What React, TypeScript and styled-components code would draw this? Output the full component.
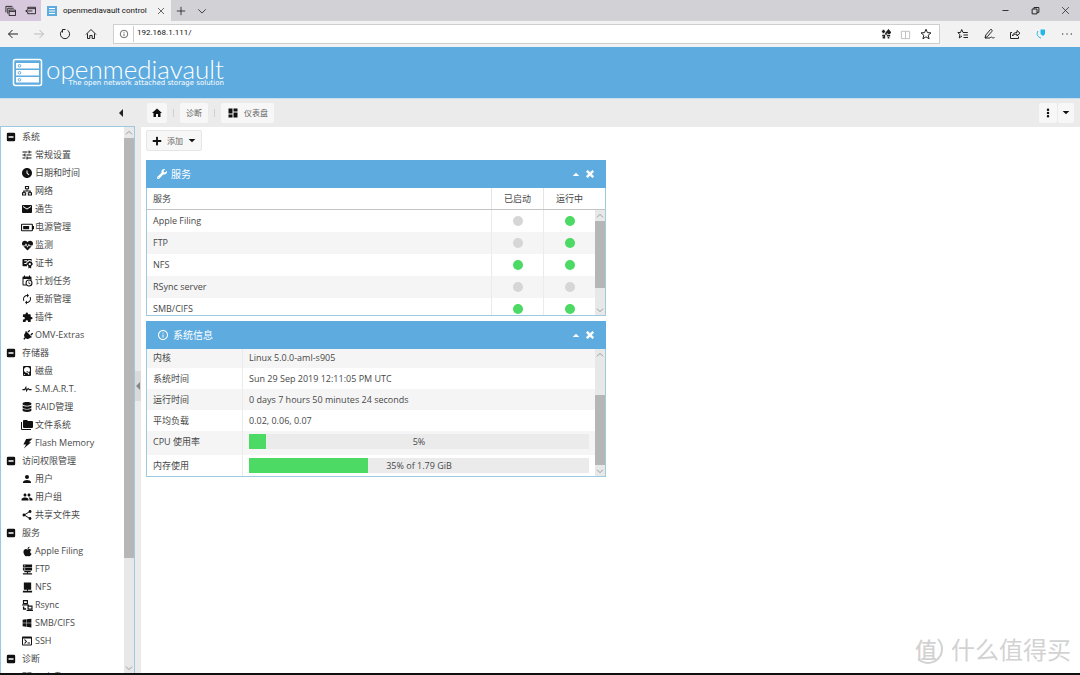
import React from "react";
import styled, { createGlobalStyle } from "styled-components";
import {
  MdTune, MdAccessTimeFilled, MdEmail, MdAutorenew, MdExtension, MdPerson,
  MdPeople, MdShare, MdDashboard, MdHome, MdInfoOutline,
} from "react-icons/md";
import {
  FaPlug, FaDatabase, FaApple, FaWindows, FaWrench,
  FaHeartbeat, FaPlus, FaTimes,
} from "react-icons/fa";

const blue = "#5dabdf";
const line = "#9ccbe0";
const grey = "#ebebeb";
const green = "#4cd964";
const sans = `"Open Sans", "Noto Sans CJK SC", sans-serif`;

const GlobalStyle = createGlobalStyle`
  * { box-sizing: border-box; }
  body { margin: 0; background: #fff; color: #484848; font: 9px/18px ${sans}; }
  button, input { font: inherit; color: inherit; border: 0; padding: 0; margin: 0; background: none; }
  button { display: inline-flex; align-items: center; justify-content: center; }
  ul { list-style: none; margin: 0; padding: 0; }
  a { color: inherit; text-decoration: none; }
  svg { display: block; flex: none; }
`;

const Page = styled.div`
  display: flex;
  flex-direction: column;
  height: 100vh;
  overflow: hidden;
  border-bottom: 2px solid #111;
`;

/* ---------- browser chrome ---------- */
const TabStrip = styled.div`
  display: flex;
  height: 21px;
  flex: none;
  background: #d1d1d6;
  color: #222;
`;
const TabTools = styled.div`
  display: flex;
  align-items: center;
  justify-content: space-between;
  width: 41px;
  padding: 0 5px;
  background: #d8c8de;
`;
const Tab = styled.div`
  display: flex;
  align-items: center;
  gap: 6px;
  width: 130px;
  padding: 0 6px;
  background: #f2f2f2;
`;
const TabTitle = styled.span`
  flex: 1;
  overflow: hidden;
  white-space: nowrap;
  color: #111;
  font-family: Roboto, sans-serif;
  font-size: 8px;
`;
const TabActions = styled.div`
  display: flex;
  align-items: center;
  gap: 11px;
  flex: 1;
  padding-left: 5px;
`;
const WindowActions = styled.div`
  display: flex;
  align-items: center;
  gap: 21px;
  padding-right: 10px;
`;
const AddressRow = styled.div`
  display: flex;
  align-items: center;
  height: 26px;
  flex: none;
  background: #f2f2f2;
  color: #222;
`;
const NavButtons = styled.div`
  display: flex;
  gap: 14px;
  width: 113px;
  padding-left: 7px;
`;
const AddressBox = styled.div`
  display: flex;
  align-items: center;
  gap: 4px;
  flex: 1;
  height: 20px;
  padding: 0 7px 0 5px;
  background: #fff;
  border: 1px solid #cfcfcf;
`;
const AddressInput = styled.input`
  flex: 1;
  min-width: 0;
  height: 16px;
  padding: 0 0 3px 3px;
  border-left: 1px solid #ccc;
  color: #111;
  font-family: Roboto, sans-serif;
  font-size: 8px;
  outline: 0;
`;
const AddressTools = styled.div`
  display: flex;
  align-items: center;
  gap: 9px;
`;
const BrowserTools = styled.div`
  display: flex;
  gap: 14px;
  padding: 0 7px 0 17px;
`;
const FadedButton = styled.button`
  color: #bbb;
`;

/* ---------- application header ---------- */
const Header = styled.header`
  display: flex;
  align-items: center;
  gap: 3px;
  height: 51px;
  flex: none;
  padding: 0 12px;
  background: ${blue};
  color: #fff;
`;
const Brand = styled.div`
  display: flex;
  flex-direction: column;
  align-items: flex-end;
`;
const BrandName = styled.span`
  font: 300 26px/22px Lato, sans-serif;
`;
const BrandLine = styled.span`
  font: 7px/7px "DejaVu Sans", sans-serif;
`;

/* ---------- body ---------- */
const Body = styled.div`
  display: flex;
  flex: 1;
  min-height: 0;
  border-top: 1px solid #c8dfee;
`;
const Sidebar = styled.nav`
  display: flex;
  flex-direction: column;
  width: 135px;
  flex: none;
`;
const SidebarHead = styled.div`
  display: flex;
  align-items: center;
  justify-content: flex-end;
  height: 27px;
  flex: none;
  padding-right: 10px;
  background: ${grey};
  color: #222;
`;
const TreeFrame = styled.div`
  display: flex;
  flex: 1;
  min-height: 0;
  border: 1px solid ${line};
  border-bottom: 0;
`;
const Tree = styled.ul`
  flex: 1;
  padding-top: 1px;
  overflow: hidden;
`;
const Group = styled.button`
  display: flex;
  justify-content: flex-start;
  gap: 6px;
  width: 100%;
  height: 18px;
  padding-left: 5px;
  svg { color: #111; }
`;
const Leaf = styled.a`
  display: flex;
  align-items: center;
  gap: 2px;
  height: 18px;
  padding-left: 20px;
  white-space: nowrap;
`;
const LeafIcon = styled.span`
  display: flex;
  justify-content: center;
  width: 12px;
  color: #111;
`;
const Splitter = styled.div`
  display: flex;
  align-items: center;
  width: 6px;
  flex: none;
  background: ${grey};
`;
const SplitterGrip = styled.button`
  width: 6px;
  height: 30px;
  background: #dadada;
  color: #888;
`;
const Main = styled.main`
  display: flex;
  flex-direction: column;
  flex: 1;
  min-width: 0;
`;
const Breadcrumbs = styled.div`
  display: flex;
  align-items: center;
  gap: 6px;
  height: 28px;
  flex: none;
  padding: 0 6px;
  background: ${grey};
`;
const Divider = styled.span`
  width: 1px;
  height: 8px;
  background: #d0d0d0;
`;
const ToolButton = styled.button<{ $wide?: boolean }>`
  gap: 5px;
  height: 20px;
  padding: 0 ${(p) => (p.$wide ? 6 : 4)}px;
  background: #f7f7f7;
  border-radius: 2px;
  color: #666;
  font-size: 8px;
  svg { color: #111; }
`;
const SplitButton = styled.div`
  display: flex;
  gap: 1px;
  margin-left: auto;
`;
const Toolbar = styled.div`
  display: flex;
  padding: 3px 5px 9px;
`;
const AddButton = styled(ToolButton)`
  height: 21px;
  padding: 0 5px;
  border: 1px solid #e6e6e6;
`;
const Dashboard = styled.div`
  display: grid;
  grid-template-columns: 1fr 1fr;
  gap: 5px;
  padding: 0 9px 0 5px;
`;
const Column = styled.div`
  display: flex;
  flex-direction: column;
  gap: 5px;
`;
const Panel = styled.section`
  border: 1px solid ${line};
`;
const PanelHead = styled.div`
  display: flex;
  align-items: center;
  gap: 4px;
  height: 28px;
  margin: -1px -1px 0;
  padding: 0 11px;
  background: ${blue};
  color: #fff;
`;
const PanelTitle = styled.h2`
  flex: 1;
  margin: 0;
  font: 10px/18px ${sans};
`;
const PanelTool = styled.button`
  width: 10px;
  height: 12px;
`;
const ScrollArea = styled.div<{ $height: number }>`
  display: flex;
  height: ${(p) => p.$height}px;
`;
const Viewport = styled.div`
  flex: 1;
  min-width: 0;
  overflow: hidden;
`;
const DataTable = styled.table`
  width: 100%;
  border-collapse: separate;
  border-spacing: 0;
  table-layout: fixed;
  th, td { padding: 0 6px; text-align: left; font-weight: 400; }
`;
const ServiceHead = styled(DataTable)`
  border-bottom: 1px solid #c4c4c4;
  th { height: 21px; }
  th + th { border-left: 1px solid #e4e4e4; text-align: center; }
  th:last-child { padding-right: 16px; }
`;
const ServiceBody = styled(DataTable)`
  td { height: 22px; }
  td + td { border-left: 1px solid #ebebeb; }
  tr:nth-child(even) { background: #f5f5f5; }
`;
const InfoBody = styled(DataTable)`
  margin-top: -2px;
  th, td { height: 21px; line-height: 15px; }
  td { border-left: 1px solid #ebebeb; }
  tr:nth-child(odd) { background: #f5f5f5; }
`;
const BarRow = styled.tr`
  && th, && td { height: 24px; padding-top: 3px; padding-bottom: 6px; vertical-align: top; }
`;
const Dot = styled.span<{ $on: boolean }>`
  display: block;
  width: 10px;
  height: 10px;
  margin: auto;
  border-radius: 50%;
  background: ${(p) => (p.$on ? green : "#d6d6d6")};
`;
const Bar = styled.div<{ $value: number }>`
  height: 15px;
  text-align: center;
  background: linear-gradient(to right, ${green} ${(p) => p.$value}%, ${grey} ${(p) => p.$value}%);
`;
const Track = styled.div`
  display: flex;
  flex-direction: column;
  align-items: center;
  width: 10px;
  flex: none;
  background: #e8e8e8;
  color: #777;
`;
const TrackArrow = styled.span`
  display: flex;
  align-items: center;
  height: 11px;
`;
const TrackRoom = styled.span<{ $grow: number }>`
  flex: ${(p) => p.$grow} 0 0;
`;
const Thumb = styled.span<{ $grow: number }>`
  flex: ${(p) => p.$grow} 0 0;
  width: 100%;
  background: #b6b6b6;
`;
const Watermark = styled.div`
  position: absolute;
  right: 9px;
  bottom: 9px;
  display: flex;
  align-items: center;
  gap: 8px;
  color: #d2d2d2;
  font: 24px/34px "Noto Sans CJK SC", sans-serif;
`;
const Seal = styled.span`
  width: 30px;
  height: 30px;
  border: 2px solid #d2d2d2;
  border-color: transparent #d2d2d2 #d2d2d2 transparent;
  border-radius: 50%;
  text-align: left;
  font-size: 22px;
  line-height: 24px;
  font-weight: 500;
`;

/* ---------- icons ---------- */
const Solid = ({ d, size = 12 }: { d: string; size?: number }) => (
  <svg width={size} height={size} viewBox="0 0 24 24" fill="currentColor"><path fillRule="evenodd" d={d} /></svg>
);
const Stroke = ({ d, size = 12, w = 1 }: { d: string; size?: number; w?: number }) => (
  <svg width={size} height={size} viewBox="0 0 12 12" fill="none" stroke="currentColor" strokeWidth={w}><path d={d} /></svg>
);
const minusBox = "M5 2H19A3 3 0 0 1 22 5V19A3 3 0 0 1 19 22H5A3 3 0 0 1 2 19V5A3 3 0 0 1 5 2ZM6 10V14H18V10Z";
const calendar = "M15,13H16.5V15.82L18.94,17.23L18.19,18.53L15,16.69V13M19,8H5V19H9.67C9.24,18.09 9,17.07 9,16A7,7 0 0,1 16,9C17.07,9 18.09,9.24 19,9.67V8M5,21C3.89,21 3,20.1 3,19V5C3,3.89 3.89,3 5,3H6V1H8V3H16V1H18V3H19A2,2 0 0,1 21,5V11.1C22.24,12.36 23,14.09 23,16A7,7 0 0,1 16,23C14.09,23 12.36,22.24 11.1,21H5M16,11.15A4.85,4.85 0 0,0 11.15,16C11.15,18.68 13.32,20.85 16,20.85A4.85,4.85 0 0,0 20.85,16C20.85,13.32 18.68,11.15 16,11.15Z";
const disk = "M6,2H18A2,2 0 0,1 20,4V20A2,2 0 0,1 18,22H6A2,2 0 0,1 4,20V4A2,2 0 0,1 6,2M12,4A6,6 0 0,0 6,10C6,13.31 8.69,16 12.1,16L11.22,13.77C10.95,13.29 11.11,12.68 11.59,12.4L12.45,11.9C12.93,11.63 13.54,11.79 13.82,12.27L15.74,14.69C17.12,13.59 18,11.9 18,10A6,6 0 0,0 12,4M7,18A1,1 0 0,0 6,19A1,1 0 0,0 7,20A1,1 0 0,0 8,19A1,1 0 0,0 7,18M12.09,13.27L14.58,19.58L17.17,18.08L12.95,12.77L12.09,13.27Z";
const pulse = "M1,12H5.8L10.1,4L11.3,13L14.5,9L17.8,12H23V15H17L14.67,12.67L9.92,19.5L8.94,12L7,15H1V12Z";
const folders = "M22,4H14L12,2H6A2,2 0 0,0 4,4V16A2,2 0 0,0 6,18H22A2,2 0 0,0 24,16V6A2,2 0 0,0 22,4M2,6H0V20A2,2 0 0,0 2,22H20V20H2V6Z";
const terminal = "M20,19V7H4V19H20M20,3A2,2 0 0,1 22,5V19A2,2 0 0,1 20,21H4A2,2 0 0,1 2,19V5C2,3.89 2.9,3 4,3H20M13,17V15H18V17H13M9.58,13L5.57,9H8.4L11.7,12.3C12.09,12.69 12.09,13.33 11.7,13.72L8.42,17H5.59L9.58,13Z";
const servers = "M2 1H22V7H2ZM4 3V5H7V3ZM2 8H22V14H2ZM4 10V12H7V10ZM5 15H19V18H13V20H22V23H2V20H11V18H5Z";
const server = "M4 1H20V17H13V19H22V23H2V19H11V17H4Z";
const lan = "M7 0H17V8H13V11H21V15H24V23H14V15H18V13H6V15H10V23H0V15H3V11H11V8H7ZM9.500 2.500V5.500H14.500V2.500ZM2.500 17.500V20.500H7.500V17.500ZM16.500 17.500V20.500H21.500V17.500Z";
const certificate = "M3 2H21V7A6 6 0 0 0 11 15V18H3A2 2 0 0 1 1 16V4A2 2 0 0 1 3 2ZM5 5V7H11V5ZM5 11V13H9V11ZM17 6L19 8L22 8L22 11L24 13L22 15L20 18V23L17 21L14 23V18L12 15L10 13L12 11L12 8L15 8ZM17 11A2.500 2.500 0 1 0 17 16A2.500 2.500 0 1 0 17 11Z";
const machines = "M2 0H13V9H2ZM4.500 2.500V6.500H10.500V2.500ZM0 10H15V12H0ZM2 14H5V18H9V21H2ZM12 12H23V21H12ZM14.500 14.500V18.500H20.500V14.500ZM10 22H24V24H10Z";
const battery = "M2 5H20A2 2 0 0 1 22 7V9H24V15H22V17A2 2 0 0 1 20 19H2A2 2 0 0 1 0 17V7A2 2 0 0 1 2 5ZM2 7V17H20V7ZM4 9H15V15H4Z";
const bolt = "M9 2L23 1L15 9L20 9L4 23L9 14L3 14Z";
const kebab = "M12 1A3 3 0 0 1 12 7A3 3 0 0 1 12 1ZM12 9A3 3 0 0 1 12 15A3 3 0 0 1 12 9ZM12 17A3 3 0 0 1 12 23A3 3 0 0 1 12 17Z";

const Up = () => <Stroke size={8} d="M1.500 8L6 3.500L10.500 8" />;
const Down = () => <Stroke size={8} d="M1.500 4L6 8.500L10.500 4" />;
const Caret = ({ dir }: { dir: "up" | "down" | "left" }) => {
  const d = { up: "M1 9L6 4L11 9Z", down: "M1 3L6 8L11 3Z", left: "M9 0L3 6L9 12Z" }[dir];
  return <svg width={8} height={8} viewBox="0 0 12 12" fill="currentColor"><path d={d} /></svg>;
};

const Scrollbar = ({ before, thumb, after }: { before: number; thumb: number; after: number }) => (
  <Track aria-hidden>
    <TrackArrow><Up /></TrackArrow>
    <TrackRoom $grow={before} />
    <Thumb $grow={thumb} />
    <TrackRoom $grow={after} />
    <TrackArrow><Down /></TrackArrow>
  </Track>
);

const TiltedPlug = styled(FaPlug)`
  transform: rotate(45deg);
`;

type Item = [string, React.ReactNode];
const tree: { name: string; items: Item[] }[] = [
  {
    name: "系统",
    items: [
      ["常规设置", <MdTune size={12} />],
      ["日期和时间", <MdAccessTimeFilled size={12} />],
      ["网络", <Solid d={lan} size={10} />],
      ["通告", <MdEmail size={12} />],
      ["电源管理", <Solid d={battery} size={13} />],
      ["监测", <FaHeartbeat size={11} />],
      ["证书", <Solid d={certificate} size={11} />],
      ["计划任务", <Solid d={calendar} />],
      ["更新管理", <MdAutorenew size={12} />],
      ["插件", <MdExtension size={11} />],
      ["OMV-Extras", <TiltedPlug size={11} />],
    ],
  },
  {
    name: "存储器",
    items: [
      ["磁盘", <Solid d={disk} />],
      ["S.M.A.R.T.", <Solid d={pulse} size={10} />],
      ["RAID管理", <FaDatabase size={10} />],
      ["文件系统", <Solid d={folders} />],
      ["Flash Memory", <Solid d={bolt} size={11} />],
    ],
  },
  {
    name: "访问权限管理",
    items: [
      ["用户", <MdPerson size={12} />],
      ["用户组", <MdPeople size={12} />],
      ["共享文件夹", <MdShare size={12} />],
    ],
  },
  {
    name: "服务",
    items: [
      ["Apple Filing", <FaApple size={11} />],
      ["FTP", <Solid d={servers} size={11} />],
      ["NFS", <Solid d={server} size={11} />],
      ["Rsync", <Solid d={machines} size={11} />],
      ["SMB/CIFS", <FaWindows size={10} />],
      ["SSH", <Solid d={terminal} />],
    ],
  },
  { name: "诊断", items: [["仪表盘", <MdDashboard size={12} />]] },
];

const services: [string, boolean, boolean][] = [
  ["Apple Filing", false, true],
  ["FTP", false, true],
  ["NFS", true, true],
  ["RSync server", false, false],
  ["SMB/CIFS", true, true],
];

const info = [
  ["内核", "Linux 5.0.0-aml-s905"],
  ["系统时间", "Sun 29 Sep 2019 12:11:05 PM UTC"],
  ["运行时间", "0 days 7 hours 50 minutes 24 seconds"],
  ["平均负载", "0.02, 0.06, 0.07"],
];
const usage: [string, string, number][] = [
  ["CPU 使用率", "5%", 5],
  ["内存使用", "35% of 1.79 GiB", 35],
];

const PanelTools = () => (
  <>
    <PanelTool aria-label="折叠"><Caret dir="up" /></PanelTool>
    <PanelTool aria-label="关闭"><FaTimes size={10} stroke="currentColor" strokeWidth={50} /></PanelTool>
  </>
);

export default function App() {
  return (
    <Page>
      <GlobalStyle />
      <TabStrip>
        <TabTools>
          <button aria-label="Tabs set aside"><Stroke size={11} d="M1 8V1.500H8M3 9.500V3.500H9.500M4.500 5.500H11.500V11.500H4.500ZM4.500 7H11.500" /></button>
          <button aria-label="Set tabs aside"><Stroke size={11} d="M3 4V2.500H11.500V9.500H3V8M3 4H11.500M0.500 6.500H8M3 4.500L1 6.500L3 8.500" /></button>
        </TabTools>
        <Tab>
          <svg width="10" height="10" viewBox="0 0 10 10"><path fill={blue} d="M0 0H10V10H0Z" /><path fill="#fff" d="M2 2H8V3H2ZM2 4.500H8V5.500H2ZM2 7H8V8H2Z" /></svg>
          <TabTitle>openmediavault control</TabTitle>
          <button aria-label="Close tab"><Stroke size={8} d="M1.500 1.500L10.500 10.500M10.500 1.500L1.500 10.500" /></button>
        </Tab>
        <TabActions>
          <button aria-label="New tab"><Stroke size={10} d="M6 1V11M1 6H11" /></button>
          <button aria-label="Tab previews"><Stroke size={10} d="M1.500 4L6 8.500L10.500 4" /></button>
        </TabActions>
        <WindowActions>
          <button aria-label="Minimize"><Stroke size={9} d="M2 6H10" w={1.2} /></button>
          <button aria-label="Restore"><Stroke size={9} w={1.3} d="M1.500 4H8V10.500H1.500ZM4 4V2H10.500V8.500H8" /></button>
          <button aria-label="Close"><Stroke size={9} d="M1.500 1.500L10.500 10.500M10.500 1.500L1.500 10.500" /></button>
        </WindowActions>
      </TabStrip>
      <AddressRow>
        <NavButtons>
          <button aria-label="Back"><Stroke d="M11 6H1.500M5.500 2L1.500 6L5.500 10" /></button>
          <FadedButton aria-label="Forward"><Stroke d="M1 6H10.500M6.500 2L10.500 6L6.500 10" /></FadedButton>
          <button aria-label="Refresh"><Stroke d="M3.500 1.500H6.500M3.500 1.500V4.500M3.500 2.200A4.600 4.600 0 1 0 8.500 2.200" /></button>
          <button aria-label="Home"><Stroke d="M1 6.500L6 1.500L11 6.500M2.500 5.500V10.500H4.800V7.500H7.200V10.500H9.500V5.500" /></button>
        </NavButtons>
        <AddressBox>
          <Stroke size={10} w={0.8} d="M6 1.500A4.500 4.500 0 1 0 6 10.500A4.500 4.500 0 1 0 6 1.500M6 5.500V8.500M6 3.500V4.500" />
          <AddressInput aria-label="Address" defaultValue="192.168.1.111/" />
          <AddressTools>
            <button aria-label="Translate"><Stroke size={10} w={2} d="M1 3H5M3 1V5M7 4L9 1.500L11 4ZM8 5H11M1.500 8H4V10.500H2M7 8H11M8 10.500H10M5 6H7" /></button>
            <FadedButton aria-label="Reading view"><Stroke size={11} d="M6 2.500V10.500M1.500 2.500H10.500V10.500H1.500Z" /></FadedButton>
            <button aria-label="Favourite"><Stroke d="M6 1.200L7.400 4.600L11 4.900L8.200 7.200L9.100 10.800L6 8.800L2.900 10.800L3.800 7.200L1 4.900L4.600 4.600Z" /></button>
          </AddressTools>
        </AddressBox>
        <BrowserTools>
          <button aria-label="Hub"><Stroke d="M10.800 4.500H6L4.700 1.500L3.500 4.500H0.800L3 6.700L2.200 10L5 8M6.500 7H11M6.500 9.500H11" /></button>
          <button aria-label="Notes"><Stroke d="M2 10L2.800 7L7.500 1.500C9 1 9.500 2.500 8.800 3.500L4.500 8.500L2 10H7C9 7.500 8.500 11 11.500 9.500" /></button>
          <button aria-label="Share"><Stroke d="M3 4.500H1.500V10.500H9.500V8.500M3.500 8C4 5 6 4.500 8 4.500V2.500L11 5.200L8 8V6.200C6 6.200 4.500 6.500 3.500 8Z" /></button>
          <button aria-label="Extension"><svg width="12" height="12" viewBox="0 0 12 12"><path d="M5.500 1.500H10V6L8 8L5.500 6Z" fill="#20b8e8" /><path d="M3 3C1 6 3 9.500 6 10" stroke="#20b8e8" fill="none" /></svg></button>
          <button aria-label="More"><Stroke w={1.2} d="M1 6H2.300M5.400 6H6.700M9.700 6H11" /></button>
        </BrowserTools>
      </AddressRow>

      <Header>
        <svg width="31" height="29" viewBox="0 0 31 29" fill="none">
          <rect x="1.500" y="1.500" width="28" height="26" rx="2" stroke="#fff" strokeWidth="1.500" />
          <path fill="#fff" d="M4 5H27V10.500H4ZM4 12H27V17.500H4ZM4 19H27V24.500H4Z" />
          <g stroke={blue}><circle cx="7.500" cy="7.800" r="1.300" /><circle cx="7.500" cy="14.800" r="1.300" /><circle cx="7.500" cy="21.800" r="1.300" /></g>
        </svg>
        <Brand>
          <BrandName>openmediavault</BrandName>
          <BrandLine>The open network attached storage solution</BrandLine>
        </Brand>
      </Header>

      <Body>
        <Sidebar>
          <SidebarHead><button aria-label="折叠导航"><Caret dir="left" /></button></SidebarHead>
          <TreeFrame>
            <Tree>
              {tree.map((group) => (
                <li key={group.name}>
                  <Group><Solid d={minusBox} size={10} />{group.name}</Group>
                  <ul>
                    {group.items.map(([name, icon]) => (
                      <li key={name}><Leaf href="#"><LeafIcon>{icon}</LeafIcon>{name}</Leaf></li>
                    ))}
                  </ul>
                </li>
              ))}
            </Tree>
            <Scrollbar before={0} thumb={421} after={104} />
          </TreeFrame>
        </Sidebar>
        <Splitter><SplitterGrip aria-label="折叠"><Caret dir="left" /></SplitterGrip></Splitter>
        <Main>
          <Breadcrumbs>
            <ToolButton aria-label="主页"><MdHome size={12} /></ToolButton>
            <Divider />
            <ToolButton $wide>诊断</ToolButton>
            <Divider />
            <ToolButton $wide><MdDashboard size={12} />仪表盘</ToolButton>
            <SplitButton>
              <ToolButton aria-label="更多"><Solid d={kebab} size={10} /></ToolButton>
              <ToolButton aria-label="菜单"><Caret dir="down" /></ToolButton>
            </SplitButton>
          </Breadcrumbs>
          <Toolbar>
            <AddButton><FaPlus size={10} />添加<Caret dir="down" /></AddButton>
          </Toolbar>
          <Dashboard>
            <Column>
              <Panel>
                <PanelHead><FaWrench size={10} /><PanelTitle>服务</PanelTitle><PanelTools /></PanelHead>
                <ServiceHead>
                  <colgroup><col /><col style={{ width: 52 }} /><col style={{ width: 62 }} /></colgroup>
                  <thead><tr><th>服务</th><th>已启动</th><th>运行中</th></tr></thead>
                </ServiceHead>
                <ScrollArea $height={105}>
                  <Viewport>
                    <ServiceBody>
                      <colgroup><col /><col style={{ width: 52 }} /><col style={{ width: 52 }} /></colgroup>
                      <tbody>
                        {services.map(([name, enabled, running]) => (
                          <tr key={name}>
                            <td>{name}</td>
                            <td><Dot $on={enabled} /></td>
                            <td><Dot $on={running} /></td>
                          </tr>
                        ))}
                      </tbody>
                    </ServiceBody>
                  </Viewport>
                  <Scrollbar before={0} thumb={68} after={16} />
                </ScrollArea>
              </Panel>
              <Panel>
                <PanelHead><MdInfoOutline size={12} /><PanelTitle>系统信息</PanelTitle><PanelTools /></PanelHead>
                <ScrollArea $height={127}>
                  <Viewport>
                    <InfoBody>
                      <colgroup><col style={{ width: 95 }} /><col /></colgroup>
                      <tbody>
                        {info.map(([name, value]) => (
                          <tr key={name}><th scope="row">{name}</th><td>{value}</td></tr>
                        ))}
                        {usage.map(([name, text, value]) => (
                          <BarRow key={name}><th scope="row">{name}</th><td><Bar $value={value}>{text}</Bar></td></BarRow>
                        ))}
                      </tbody>
                    </InfoBody>
                  </Viewport>
                  <Scrollbar before={35} thumb={70} after={0} />
                </ScrollArea>
              </Panel>
            </Column>
          </Dashboard>
        </Main>
      </Body>
      <Watermark><Seal>值</Seal>什么值得买</Watermark>
    </Page>
  );
}
